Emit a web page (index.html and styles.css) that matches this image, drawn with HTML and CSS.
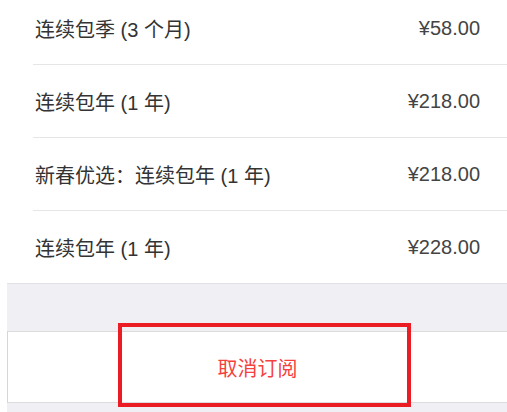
FILE: index.html
```html
<!DOCTYPE html>
<html lang="zh-CN">
<head>
<meta charset="utf-8">
<title>订阅管理</title>
<link rel="stylesheet" href="styles.css">
</head>
<body>
<div class="list">
  <div class="row"><span class="name">连续包季 (3 个月)</span><span class="price">¥58.00</span></div>
  <div class="row"><span class="name">连续包年 (1 年)</span><span class="price">¥218.00</span></div>
  <div class="row"><span class="name">新春优选：连续包年 (1 年)</span><span class="price">¥218.00</span></div>
  <div class="row last"><span class="name">连续包年 (1 年)</span><span class="price">¥228.00</span></div>
</div>
<div class="footer">
  <div class="cancel">
    <span class="cancel-text">取消订阅</span>
    <div class="highlight"></div>
  </div>
</div>
</body>
</html>
```

FILE: styles.css
```css
html, body {
  margin: 0;
  padding: 0;
  background: #ffffff;
  height: 100%;
  overflow: hidden;
}
body {
  font-family: "Liberation Sans", "Noto Sans CJK SC", sans-serif;
  font-size: 20px;
}
.list {
  margin-top: -8px;
}
.row {
  height: 72px;
  margin-left: 33px;
  padding-left: 2px;
  padding-right: 27px;
  border-bottom: 1px solid #e6e6e6;
  display: flex;
  align-items: center;
  justify-content: space-between;
}
.row.last {
  border-bottom: none;
}
.name {
  color: #333333;
}
.price {
  color: #444444;
}
.footer {
  margin-left: 7px;
  background: #efeff4;
  border-top: 1px solid #e2e2e6;
  padding-top: 47px;
  padding-bottom: 12px;
}
.cancel {
  position: relative;
  height: 70px;
  background: #ffffff;
  border-top: 1px solid #dcdcdc;
  border-bottom: 1px solid #dcdcdc;
  border-left: 1px solid #d6d6d6;
  display: flex;
  align-items: center;
  justify-content: center;
}
.cancel-text {
  color: #f5413d;
  font-size: 20px;
}
.highlight {
  position: absolute;
  left: 110px;
  top: -9px;
  width: 293px;
  height: 84px;
  box-sizing: border-box;
  border: 4px solid #ec1c24;
}
```
